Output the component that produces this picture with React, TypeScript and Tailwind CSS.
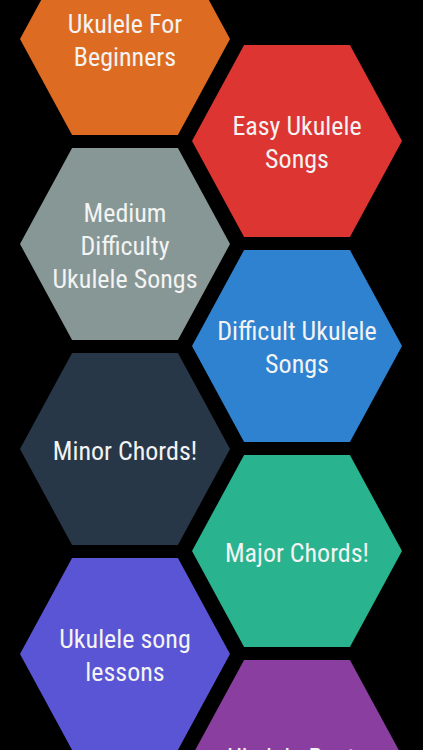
type Tile = { lines: string[]; color: string }

const left: Tile[] = [
  { lines: ['Ukulele For', 'Beginners'], color: 'bg-[#de6b22]' },
  { lines: ['Medium', 'Difficulty', 'Ukulele Songs'], color: 'bg-[#879795]' },
  { lines: ['Minor Chords!'], color: 'bg-[#283748]' },
  { lines: ['Ukulele song', 'lessons'], color: 'bg-[#5a55d4]' },
]

const right: Tile[] = [
  { lines: ['Easy Ukulele', 'Songs'], color: 'bg-[#dd3532]' },
  { lines: ['Difficult Ukulele', 'Songs'], color: 'bg-[#2f82d0]' },
  { lines: ['Major Chords!'], color: 'bg-[#29b38f]' },
  { lines: ['Ukulele Beats'], color: 'bg-[#8a3ea0]' },
]

function Hex({ tile }: { tile: Tile }) {
  return (
    <button
      className={`w-[210px] h-[192px] shrink-0 pt-[4px] flex flex-col items-center justify-center text-center text-[#f3f3f3] text-[26px] leading-[33px] [clip-path:polygon(24.8%_0,75.2%_0,100%_50%,75.2%_100%,24.8%_100%,0_50%)] ${tile.color}`}
      style={{ fontFamily: 'Roboto, "Liberation Sans", sans-serif', fontStretch: 'condensed' }}
    >
      {tile.lines.map((l) => (
        <span key={l} className="whitespace-nowrap">{l}</span>
      ))}
    </button>
  )
}

export default function App() {
  return (
    <div className="bg-black w-full h-[750px] overflow-hidden flex">
      <div className="flex flex-col gap-[13px] ml-[20px] -mt-[57px]">
        {left.map((t) => (
          <Hex key={t.lines.join(' ')} tile={t} />
        ))}
      </div>
      <div className="flex flex-col gap-[13px] -ml-[38px] mt-[45px]">
        {right.map((t) => (
          <Hex key={t.lines.join(' ')} tile={t} />
        ))}
      </div>
    </div>
  )
}
